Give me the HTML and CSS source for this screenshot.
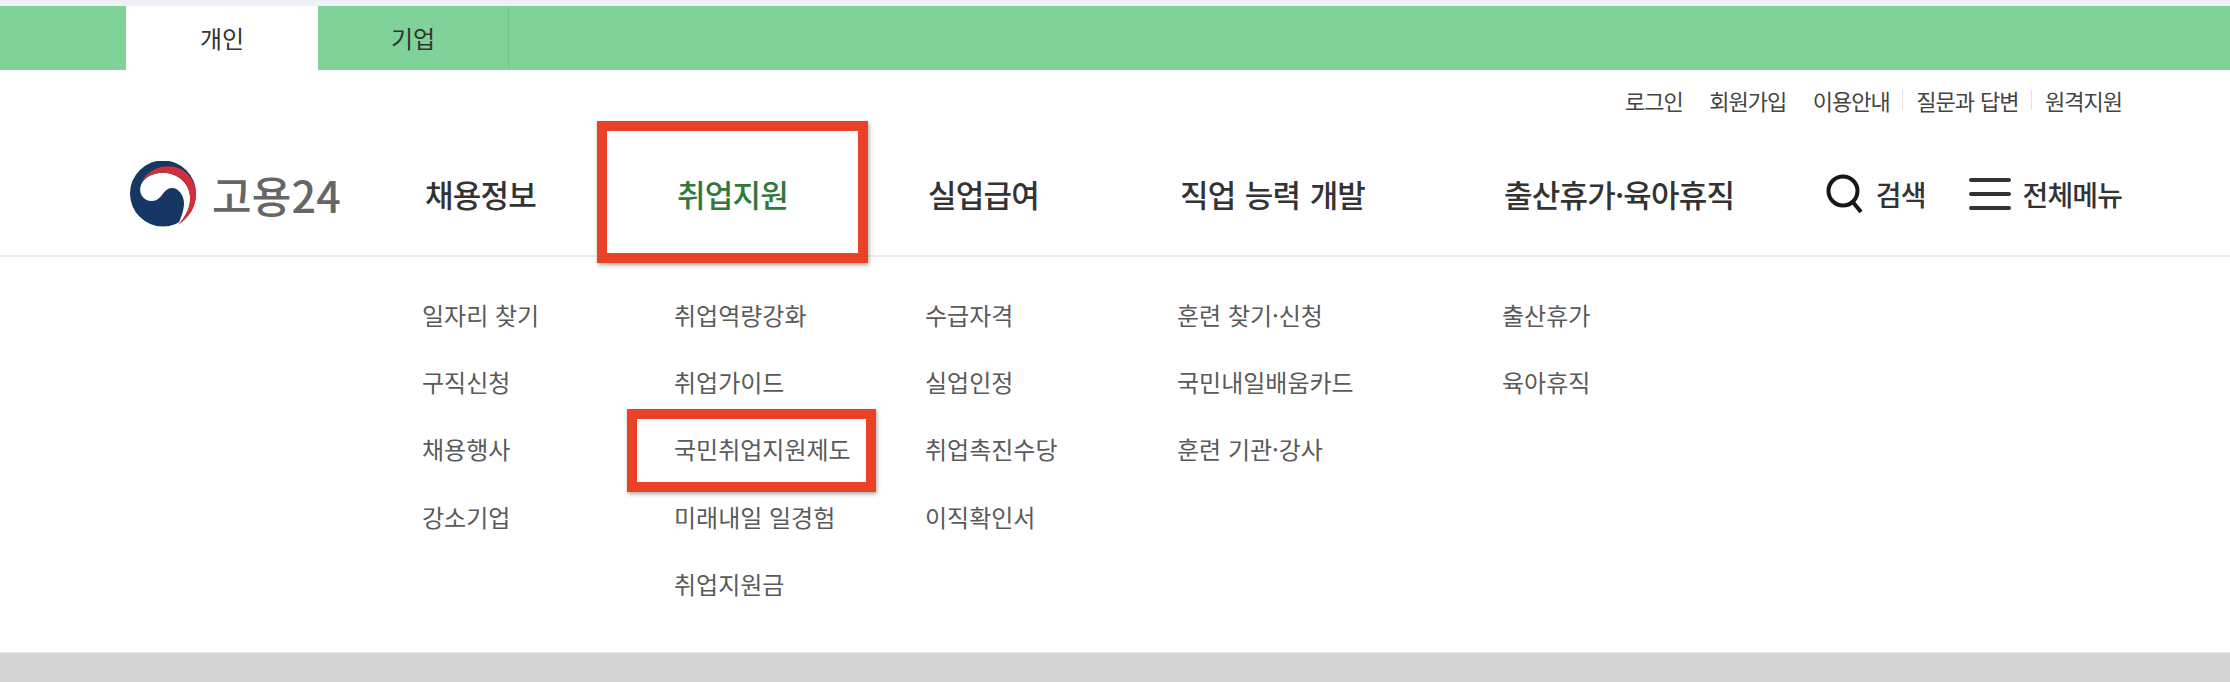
FILE: index.html
```html
<!DOCTYPE html>
<html lang="ko">
<head>
<meta charset="utf-8">
<title>고용24</title>
<link rel="stylesheet" href="styles.css">
</head>
<body>
<div class="tabs">
  <a class="tab tab-on">개인</a>
  <a class="tab">기업</a>
</div>
<div class="util">
  <a>로그인</a><a>회원가입</a><a class="sep">이용안내</a><a class="sep">질문과 답변</a><a>원격지원</a>
</div>
<header class="bar">
  <div class="logo">
    <svg class="mark" viewBox="0 0 68 66" width="68" height="66">
      <circle cx="34" cy="32.500" r="33" fill="#163663"/>
      <path d="M12 24C16 15 27 11 37 12C49 13 60 22 61 35C62 45 57 56 49 64C52 57 55 49 55 42C55 35 50 27 43 27C34 27 33 40 23 40C14 40 9 32 12 24Z" fill="#fff"/>
      <path d="M12 21C19 9 33 3 46 6C59 9 67 21 67 34C67 46 60 57 49 64C57 55 62 45 61 35C60 22 49 13 37 12C27 11 17 15 12 21Z" fill="#d22f3c"/>
    </svg>
    <span class="wordmark">고용24</span>
  </div>
  <nav class="main">
    <a class="m1">채용정보</a>
    <a class="m2 active">취업지원</a>
    <a class="m3">실업급여</a>
    <a class="m4">직업 능력 개발</a>
    <a class="m5">출산휴가·육아휴직</a>
  </nav>
  <div class="tools">
    <a class="tool">
      <svg width="38" height="40" viewBox="0 0 38 40"><circle cx="17" cy="17" r="14.500" fill="none" stroke="#161616" stroke-width="4"/><path d="M26 27L35 38" stroke="#161616" stroke-width="4"/></svg>
      <span>검색</span>
    </a>
    <a class="tool">
      <span class="burger"><i></i><i></i><i></i></span>
      <span>전체메뉴</span>
    </a>
  </div>
</header>
<section class="drop">
  <ul><li>일자리 찾기</li><li>구직신청</li><li>채용행사</li><li>강소기업</li></ul>
  <ul><li>취업역량강화</li><li>취업가이드</li><li>국민취업지원제도</li><li>미래내일 일경험</li><li>취업지원금</li></ul>
  <ul><li>수급자격</li><li>실업인정</li><li>취업촉진수당</li><li>이직확인서</li></ul>
  <ul><li>훈련 찾기·신청</li><li>국민내일배움카드</li><li>훈련 기관·강사</li></ul>
  <ul><li>출산휴가</li><li>육아휴직</li></ul>
</section>
<div class="foot"></div>
<div class="mark-box box-a"></div>
<div class="mark-box box-b"></div>
</body>
</html>
```
FILE: styles.css
```css
* { box-sizing: border-box; }
html, body { margin: 0; padding: 0; }
body {
  width: 2230px;
  height: 682px;
  overflow: hidden;
  background: #fff;
  color: #333;
  font-family: "Noto Sans CJK KR", "Noto Sans", sans-serif;
  border-top: 6px solid #edf1f6;
  position: relative;
}
.tabs {
  height: 64px;
  background: #80d298;
  padding-left: 126px;
  display: flex;
}
.tab {
  width: 191px;
  border-right: 1px solid #72c48a;
  display: flex;
  align-items: center;
  justify-content: center;
  font-size: 24px;
  color: #333;
  padding-bottom: 2px;
}
.tab-on { width: 192px; background: #fff; border-right: 0; }
.util {
  height: 62px;
  padding: 16px 108px 0 0;
  display: flex;
  justify-content: flex-end;
  gap: 26.500px;
  font-size: 22px;
  line-height: 28px;
  color: #444;
  letter-spacing: -1px;
  word-spacing: 1px;
}
.util a { white-space: nowrap; }
.util .sep { position: relative; }
.util .sep::after {
  content: "";
  position: absolute;
  right: -13px;
  top: 4px;
  width: 1px;
  height: 20px;
  background: #e4e4e4;
}
.bar {
  height: 125px;
  border-bottom: 2px solid #ececec;
  display: flex;
  align-items: center;
  position: relative;
}
.logo {
  width: 425px;
  padding-left: 129px;
  display: flex;
  align-items: center;
  gap: 15px;
}
.mark { flex: none; }
.wordmark {
  font-size: 43px;
  font-weight: 500;
  color: #666;
  letter-spacing: 0.2px;
  white-space: nowrap;
}
.main {
  display: grid;
  grid-template-columns: 252px 251px 252px 324px auto;
  font-size: 31px;
  font-weight: 500;
  color: #333;
  letter-spacing: -0.8px;
  word-spacing: 1.500px;
  white-space: nowrap;
}
.active { color: #2f7a3a; }
.tools {
  margin-left: auto;
  padding-right: 108px;
  display: flex;
  align-items: center;
  gap: 43px;
}
.tool {
  display: flex;
  align-items: center;
  gap: 12px;
  font-size: 28px;
  font-weight: 500;
  color: #333;
  white-space: nowrap;
  letter-spacing: -0.9px;
}
.burger { display: flex; flex-direction: column; gap: 10px; width: 42px; }
.burger i { display: block; height: 4px; border-radius: 2px; background: #333; }
.drop {
  height: 395px;
  padding: 40px 0 0 422px;
  display: grid;
  grid-template-columns: 252px 251px 252px 325px 300px;
  font-size: 24px;
  color: #5a5a5a;
}
.drop ul { margin: 0; padding: 0; list-style: none; }
.drop li { height: 67.200px; line-height: 36px; white-space: nowrap; }
.foot { height: 30px; background: #d5d5d5; border-top: 1px solid #e4e4e4; }
.mark-box {
  position: absolute;
  border: 10px solid #e94225;
  box-shadow: 1px 2px 4px rgba(0, 0, 0, .35);
}
.box-a { left: 597px; top: 115px; width: 271px; height: 142px; }
.box-b { left: 627px; top: 403px; width: 249px; height: 83px; }
```
